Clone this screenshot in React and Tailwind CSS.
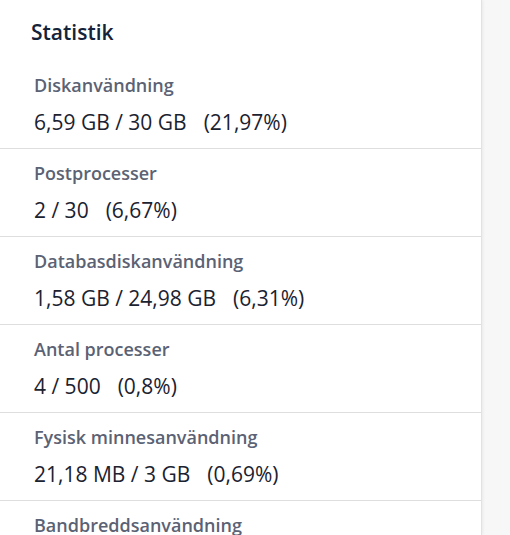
import React from 'react';

const stats = [
  { label: 'Diskanvändning', value: '6,59 GB / 30 GB', pct: '(21,97%)' },
  { label: 'Postprocesser', value: '2 / 30', pct: '(6,67%)' },
  { label: 'Databasdiskanvändning', value: '1,58 GB / 24,98 GB', pct: '(6,31%)' },
  { label: 'Antal processer', value: '4 / 500', pct: '(0,8%)' },
  { label: 'Fysisk minnesanvändning', value: '21,18 MB / 3 GB', pct: '(0,69%)' },
  { label: 'Bandbreddsanvändning', value: '', pct: '' },
];

const App = () => {
  return (
    <div
      className="flex h-[535px] w-[510px] overflow-hidden bg-[#f7f7f7]"
      style={{ fontFamily: '"Open Sans", sans-serif' }}
    >
      <div className="w-[482px] shrink-0 bg-white border-r border-[#e2e2e2] shadow-[1px_0_3px_rgba(0,0,0,0.06)]">
        <h2 className="pl-[31px] pt-[18px] pb-[27px] text-[21px] leading-[28px] font-semibold text-[#15233a]">
          Statistik
        </h2>
        {stats.map((s, i) => (
          <div
            key={s.label}
            className={`pl-[34px] pb-[12px] ${i === 0 ? 'pt-[0px]' : 'pt-[12px] border-t border-[#dedede]'}`}
          >
            <div className="text-[18px] leading-[24px] font-semibold text-[#5b6274]">{s.label}</div>
            {s.value && (
              <div className="mt-[11px] text-[21px] leading-[28px] text-[#1b2230]">
                {s.value}
                {s.pct && <span className="ml-[17px]">{s.pct}</span>}
              </div>
            )}
          </div>
        ))}
      </div>
    </div>
  );
};

export default App;
